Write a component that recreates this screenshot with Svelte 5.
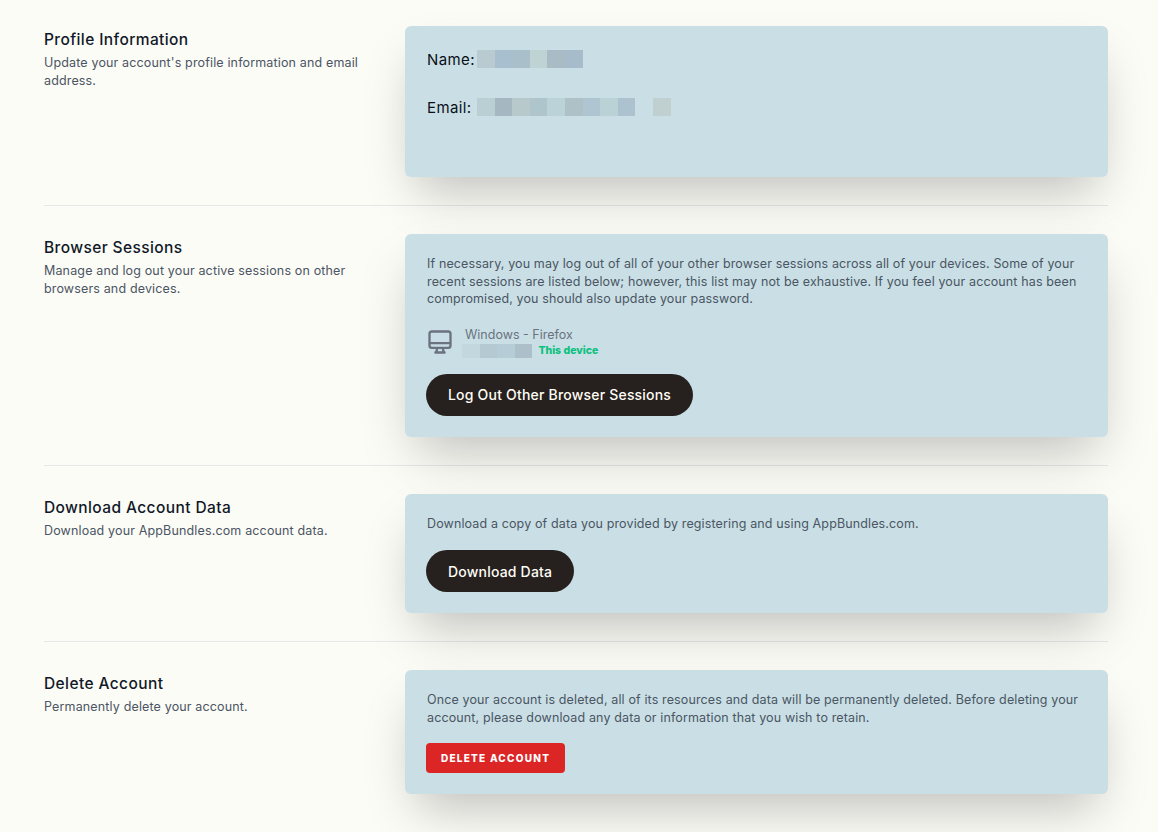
<script>
  const mosaic = (colors) => colors;
  const nameBlocks = mosaic(['#b9cbd0', '#a8bfcf', '#a9bfca', '#c0d3d4', '#a9bcc5', '#a7bccb']);
  const emailBlocks = mosaic(['#b9cfd3', '#a5b8c2', '#b7c9cb', '#aec6cb', '#bbd2d8', '#aec1c6', '#afc5d2', '#bad1d6', '#adc2cf', 'transparent', '#c0d0d0']);
  const sessionBlocks = mosaic(['#c2d7de', '#b4c9d2', '#b6cdd8', '#adc0c9']);
</script>

<main class="page">
  <section class="row">
    <div class="intro">
      <h3>Profile Information</h3>
      <p>Update your account's profile information and email address.</p>
    </div>
    <div class="card profile">
      <div class="field">
        <span class="label">Name:</span>
        <span class="mosaic">
          {#each nameBlocks as color}<i style="background:{color}"></i>{/each}
        </span>
      </div>
      <div class="field">
        <span class="label">Email:</span>
        <span class="mosaic">
          {#each emailBlocks as color}<i style="background:{color}"></i>{/each}
        </span>
      </div>
    </div>
  </section>

  <hr />

  <section class="row">
    <div class="intro">
      <h3>Browser Sessions</h3>
      <p>Manage and log out your active sessions on other browsers and devices.</p>
    </div>
    <div class="card">
      <p class="copy">If necessary, you may log out of all of your other browser sessions across all of your devices. Some of your recent sessions are listed below; however, this list may not be exhaustive. If you feel your account has been compromised, you should also update your password.</p>
      <div class="session">
        <svg viewBox="0 0 24 24" fill="none" stroke="currentColor" stroke-width="2" stroke-linecap="round" stroke-linejoin="round">
          <path d="M9.75 17L9 20l-1 1h8l-1-1-.75-3M3 13h18M5 17h14a2 2 0 002-2V5a2 2 0 00-2-2H5a2 2 0 00-2 2v10a2 2 0 002 2z" />
        </svg>
        <div class="session-info">
          <div class="agent">Windows - Firefox</div>
          <div class="where">
            <span class="mosaic small">
              {#each sessionBlocks as color}<i style="background:{color}"></i>{/each}
            </span>
            <span class="this-device">This device</span>
          </div>
        </div>
      </div>
      <button class="pill">Log Out Other Browser Sessions</button>
    </div>
  </section>

  <hr />

  <section class="row">
    <div class="intro">
      <h3>Download Account Data</h3>
      <p>Download your AppBundles.com account data.</p>
    </div>
    <div class="card">
      <p class="copy">Download a copy of data you provided by registering and using AppBundles.com.</p>
      <button class="pill download">Download Data</button>
    </div>
  </section>

  <hr />

  <section class="row">
    <div class="intro">
      <h3>Delete Account</h3>
      <p>Permanently delete your account.</p>
    </div>
    <div class="card">
      <p class="copy">Once your account is deleted, all of its resources and data will be permanently deleted. Before deleting your account, please download any data or information that you wish to retain.</p>
      <button class="danger">Delete Account</button>
    </div>
  </section>
</main>

<style>
  :global(body) {
    margin: 0;
    background: #fcfcf7;
    font-family: Inter, "Liberation Sans", sans-serif;
    overflow: hidden;
  }

  .page {
    box-sizing: border-box;
    width: 1158px;
    height: 832px;
    padding: 26px 50px 0 44px;
  }

  .row {
    display: grid;
    grid-template-columns: 361px 703px;
  }

  .intro {
    padding-top: 3px;
  }

  h3 {
    margin: 0;
    padding-top: 1px;
    font-size: 15.5px;
    line-height: 20px;
    font-weight: 500;
    letter-spacing: 0.4px;
    color: #111827;
  }

  .intro p {
    margin: 4px 0 0;
    max-width: 320px;
    font-size: 12.5px;
    line-height: 18px;
    letter-spacing: 0.15px;
    color: #4b5563;
  }

  .card {
    box-sizing: border-box;
    padding: 21px;
    background: #c9dfe5;
    border-radius: 6px;
    box-shadow: 0 25px 50px -12px rgba(0, 0, 0, 0.25);
  }

  .profile {
    height: 151px;
    padding-top: 24px;
  }

  .field {
    display: flex;
    align-items: center;
    height: 18px;
    margin-bottom: 30px;
    font-size: 15px;
    letter-spacing: 0.4px;
    color: #0b0f19;
  }

  .label {
    box-sizing: border-box;
    width: 51px;
    padding-left: 1px;
  }

  .mosaic {
    display: flex;
    height: 18px;
  }

  .mosaic i {
    display: block;
    width: 17.6px;
  }

  .mosaic.small {
    height: 14px;
  }

  .copy {
    margin: 0;
    font-size: 12.5px;
    line-height: 17.5px;
    letter-spacing: 0.13px;
    color: #4b5563;
    padding-left: 1px;
  }

  hr {
    margin: 28px 0;
    border: 0;
    border-top: 1px solid #e5e7eb;
  }

  .session {
    display: flex;
    align-items: center;
    gap: 8px;
    margin-top: 19px;
  }

  .session svg {
    width: 28px;
    height: 28px;
    color: #6b7280;
    flex-shrink: 0;
  }

  .agent {
    font-size: 12.5px;
    line-height: 16px;
    color: #6b7280;
    padding-left: 3px;
  }

  .where {
    display: flex;
    align-items: center;
    gap: 6px;
    margin-top: 1px;
  }

  .this-device {
    font-size: 10.5px;
    font-weight: 800;
    color: #0cc07f;
  }

  .pill {
    display: block;
    margin-top: 16px;
    height: 42px;
    padding: 0 22px;
    border: 0;
    border-radius: 21px;
    background: #26201e;
    color: #fffdf5;
    font: 500 14px Inter, "Liberation Sans", sans-serif;
    letter-spacing: 0.2px;
  }

  .pill.download {
    margin-top: 18px;
  }

  .danger {
    display: block;
    margin-top: 17px;
    height: 30px;
    padding: 0 15px;
    border: 0;
    border-radius: 4px;
    background: #dc2626;
    color: #fff;
    font: 800 10px Inter, "Liberation Sans", sans-serif;
    letter-spacing: 1.25px;
    text-transform: uppercase;
  }
</style>
